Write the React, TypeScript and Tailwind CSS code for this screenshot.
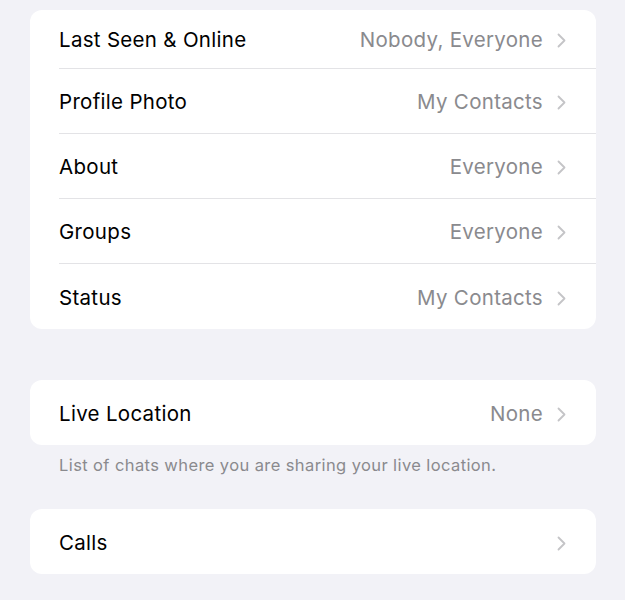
import React from 'react';

type Row = { label: string; value?: string };

const Chevron = () => (
  <svg width="9" height="15" viewBox="0 0 9 15" fill="none" className="shrink-0">
    <path d="M1.5 1.5L7.5 7.5L1.5 13.5" stroke="#c4c4c7" strokeWidth="1.8" strokeLinecap="round" strokeLinejoin="round" />
  </svg>
);

const SettingsRow = ({ row, last, first }: { row: Row; last: boolean; first?: boolean }) => (
  <div className={`flex items-center pl-[29px] ${first ? 'h-[59px]' : 'h-[65px]'}`}>
    <div className={`flex h-full flex-1 items-center pr-[30px] pt-[3px] ${last ? '' : 'border-b border-[#e3e3e6]'}`}>
      <span className="flex-1 text-[20.5px] tracking-[0.3px] text-black">{row.label}</span>
      {row.value && <span className="mr-[14px] text-[20.5px] tracking-[0.3px] text-[#8a8a8e]">{row.value}</span>}
      {!row.value && <span className="mr-[14px]" />}
      <Chevron />
    </div>
  </div>
);

const Card = ({ rows, firstShort }: { rows: Row[]; firstShort?: boolean }) => (
  <div className="overflow-hidden rounded-[12px] bg-white">
    {rows.map((r, i) => (
      <SettingsRow key={r.label} row={r} last={i === rows.length - 1} first={firstShort && i === 0} />
    ))}
  </div>
);

export default function App() {
  const privacy: Row[] = [
    { label: 'Last Seen & Online', value: 'Nobody, Everyone' },
    { label: 'Profile Photo', value: 'My Contacts' },
    { label: 'About', value: 'Everyone' },
    { label: 'Groups', value: 'Everyone' },
    { label: 'Status', value: 'My Contacts' },
  ];

  return (
    <div
      className="min-h-[600px] w-full bg-[#f2f2f7] px-[30px] pt-[10px] pr-[29px]"
      style={{ fontFamily: 'Inter, "Noto Sans", sans-serif' }}
    >
      <Card rows={privacy} firstShort />
      <div className="mt-[51px]">
        <Card rows={[{ label: 'Live Location', value: 'None' }]} />
      </div>
      <p className="px-[29px] pt-[9px] text-[16.5px] leading-[22px] tracking-[0.4px] text-[#8a8a8e]">
        List of chats where you are sharing your live location.
      </p>
      <div className="mt-[33px]">
        <Card rows={[{ label: 'Calls' }]} />
      </div>
    </div>
  );
}
